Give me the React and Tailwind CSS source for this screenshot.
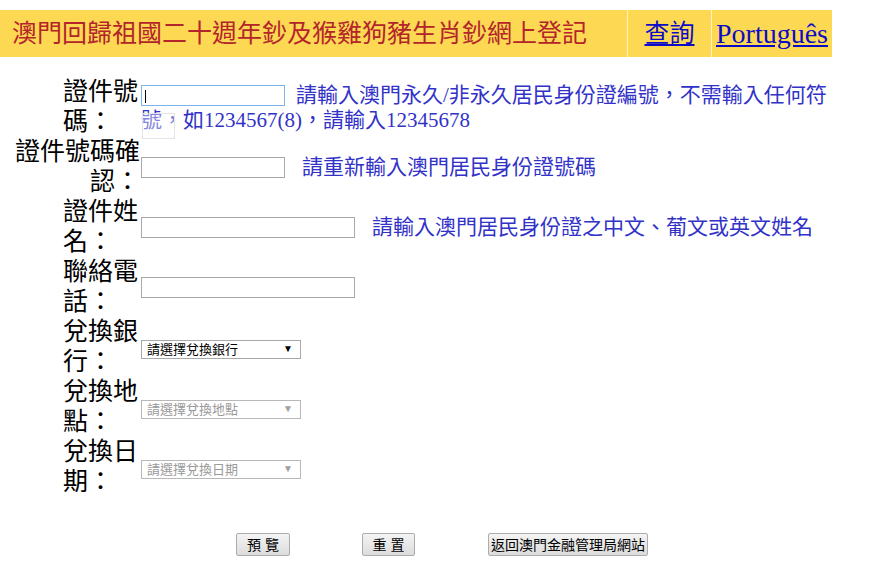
import React from "react";

const serif = {
  fontFamily: '"Liberation Serif", "Noto Sans CJK TC", serif',
};
const sans = {
  fontFamily: '"Liberation Sans", "Noto Sans CJK TC", sans-serif',
};

const Label = ({ wide, children }) => (
  <div className="w-[140px] shrink-0 flex justify-end">
    <div
      className={
        wide
          ? "text-right text-[25px] leading-[30px] text-black"
          : "w-[77px] text-left text-[25px] leading-[30px] text-black"
      }
    >
      {children}
    </div>
  </div>
);

const TextBox = ({ width, focused }) => (
  <span
    className={
      "inline-block align-middle h-[21px] bg-white border " +
      width +
      (focused ? " border-[#7eb4ea] relative" : " border-[#a9a9a9]")
    }
  >
    {focused && (
      <span className="absolute left-[3px] top-[4px] w-px h-[13px] bg-black" />
    )}
  </span>
);

const Select = ({ text, disabled }) => (
  <div
    className={
      "w-[160px] h-[19px] border bg-white flex items-center justify-between pl-[5px] pr-[7px] text-[13px] leading-none " +
      (disabled ? "border-[#b8b8b8] text-[#9a9a9a]" : "border-[#a9a9a9] text-black")
    }
    style={sans}
  >
    <span>{text}</span>
    <span className={"text-[10px] " + (disabled ? "text-[#a0a0a0]" : "text-black")}>
      ▼
    </span>
  </div>
);

const Hint = ({ className, children }) => (
  <span className={"text-[21px] leading-[23px] text-[#3232c8] " + className}>
    {children}
  </span>
);

const Btn = ({ children, className }) => (
  <button
    className={
      "h-[23px] border border-[#acacac] rounded-[2px] bg-gradient-to-b from-[#f4f4f4] to-[#dcdcdc] text-[14px] text-black leading-none " +
      className
    }
    style={sans}
  >
    {children}
  </button>
);

const App = () => {
  return (
    <div className="w-[871px] h-[578px] bg-white overflow-hidden" style={serif}>
      {/* Header bar */}
      <div className="mt-[10px] w-[832px] h-[47px] flex bg-[#fff3c4] gap-px">
        <div className="w-[627px] bg-[#fdd853] flex items-center pl-[12px] text-[25px] text-[#b3252a] whitespace-nowrap">
          澳門回歸祖國二十週年鈔及猴雞狗豬生肖鈔網上登記
        </div>
        <div className="w-[83px] bg-[#fdd853] flex items-center justify-center">
          <a href="#" className="text-[25px] text-[#0b0bc8] underline">
            查詢
          </a>
        </div>
        <div className="flex-1 bg-[#fdd853] flex items-center justify-center">
          <a href="#" className="text-[28px] text-[#0b0bc8] underline">
            Português
          </a>
        </div>
      </div>

      {/* Form */}
      <div className="mt-[20px] flex flex-col">
        <div className="h-[60px] flex items-center">
          <Label>
            證件號
            <br />
            碼：
          </Label>
          <div className="relative w-[690px] pl-px">
            <TextBox width="w-[144px]" focused />
            <Hint className="ml-[11px] align-middle">
              請輸入澳門永久/非永久居民身份證編號，不需輸入任何符號，如1234567(8)，請輸入12345678
            </Hint>
            <span className="absolute left-[2px] top-[31px] w-[33px] h-[26px] border border-[#e4e4e4] bg-white/40" />
          </div>
        </div>

        <div className="h-[60px] flex items-center">
          <Label wide>
            證件號碼確
            <br />
            認：
          </Label>
          <div className="pl-px flex items-center">
            <TextBox width="w-[144px]" />
            <Hint className="ml-[17px]">請重新輸入澳門居民身份證號碼</Hint>
          </div>
        </div>

        <div className="h-[60px] flex items-center">
          <Label>
            證件姓
            <br />
            名：
          </Label>
          <div className="pl-px flex items-center">
            <TextBox width="w-[214px]" />
            <Hint className="ml-[17px]">
              請輸入澳門居民身份證之中文、葡文或英文姓名
            </Hint>
          </div>
        </div>

        <div className="h-[60px] flex items-center">
          <Label>
            聯絡電
            <br />
            話：
          </Label>
          <div className="pl-px flex items-center">
            <TextBox width="w-[214px]" />
          </div>
        </div>

        <div className="h-[60px] flex items-center">
          <Label>
            兌換銀
            <br />
            行：
          </Label>
          <div className="pl-px pt-[4px]">
            <Select text="請選擇兌換銀行" />
          </div>
        </div>

        <div className="h-[60px] flex items-center">
          <Label>
            兌換地
            <br />
            點：
          </Label>
          <div className="pl-px pt-[4px]">
            <Select text="請選擇兌換地點" disabled />
          </div>
        </div>

        <div className="h-[60px] flex items-center">
          <Label>
            兌換日
            <br />
            期：
          </Label>
          <div className="pl-px pt-[4px]">
            <Select text="請選擇兌換日期" disabled />
          </div>
        </div>
      </div>

      {/* Buttons */}
      <div className="mt-[36px] flex items-center pl-[236px]">
        <Btn className="w-[54px]">預 覽</Btn>
        <Btn className="w-[53px] ml-[72px]">重 置</Btn>
        <Btn className="w-[160px] ml-[73px] text-[13px]">返回澳門金融管理局網站</Btn>
      </div>
    </div>
  );
};

export default App;
